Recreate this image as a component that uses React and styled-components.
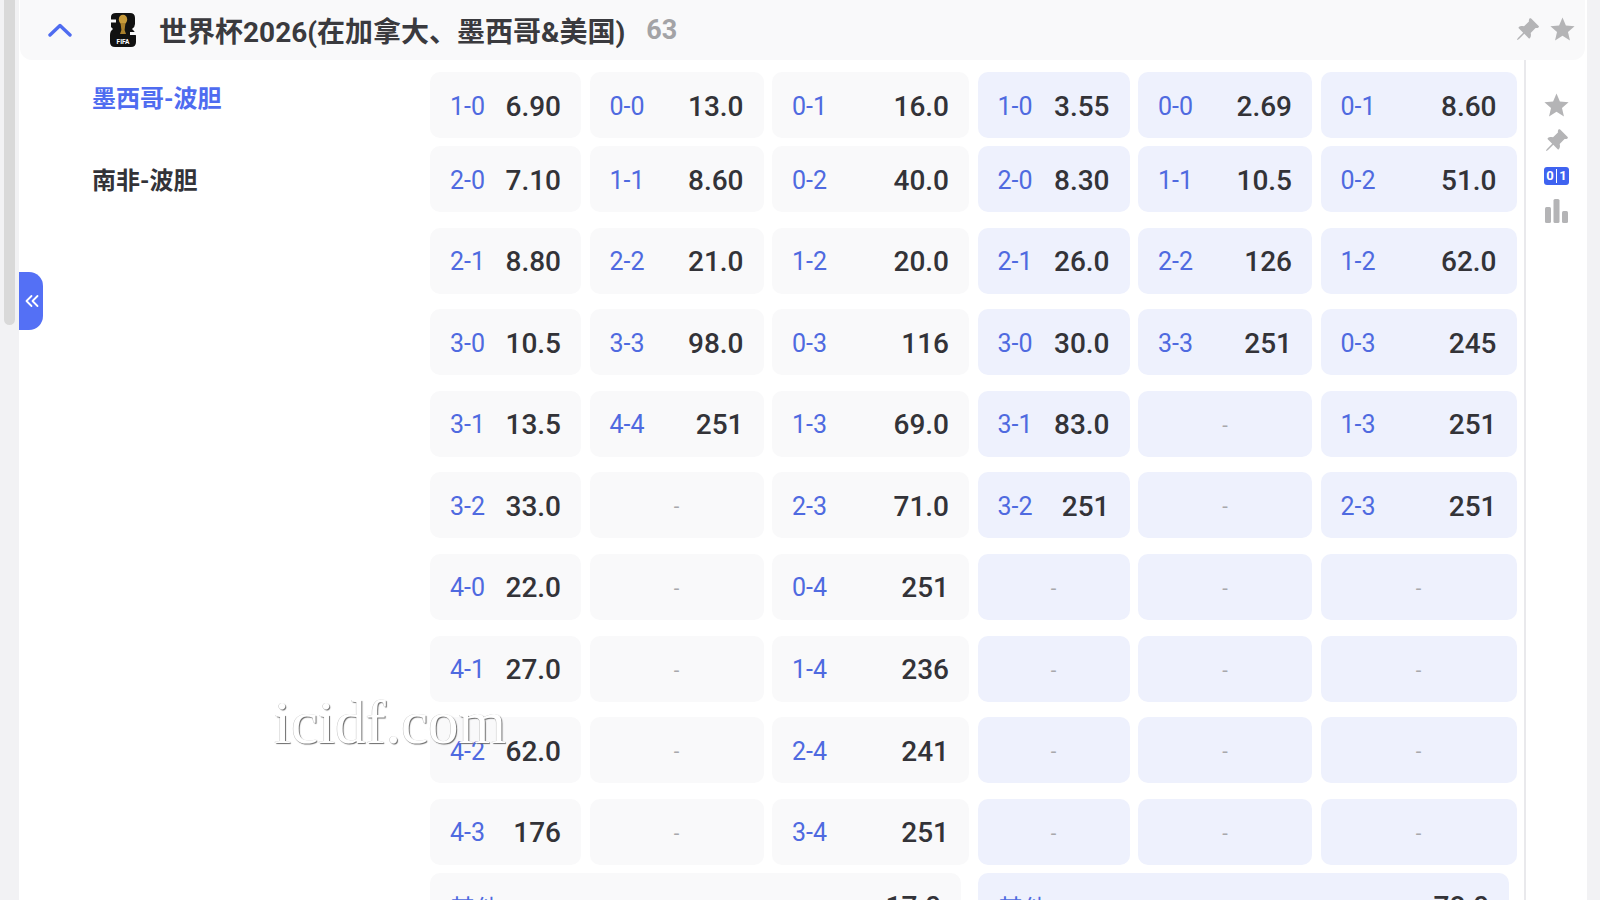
import React from "react";
import styled, { createGlobalStyle } from "styled-components";
import { BsPinAngleFill } from "react-icons/bs";
import { MdStar } from "react-icons/md";

const Global = createGlobalStyle`
  html, body { margin: 0; padding: 0; height: 900px; overflow: hidden; background: #f2f2f4; }
  * { box-sizing: border-box; }
  body { font-family: Roboto, "Noto Sans CJK SC", sans-serif; }
`;

const Page = styled.div`
  position: relative;
  display: flex;
  width: 1600px;
  height: 900px;
  overflow: hidden;
`;
const Gutter = styled.div`
  width: 19px;
  flex: none;
  padding-left: 4px;
`;
const Thumb = styled.div`
  width: 11px;
  height: 325px;
  background: #d9d9d9;
  border-radius: 0 0 6px 6px;
`;
const Main = styled.main`
  width: 1568px;
  flex: none;
  height: 900px;
  background: #fff;
`;
const Header = styled.header`
  display: flex;
  align-items: center;
  height: 60px;
  margin: 0 2px 0 1px;
  padding: 0 8px 1px 28px;
  background: #f9f9fa;
  border-radius: 0 0 12px 12px;
`;
const Chevron = styled.svg`
  width: 24px;
  height: 14px;
  flex: none;
`;
const Logo = styled.svg`
  width: 30px;
  height: 34px;
  flex: none;
  margin: 0 21px 0 36px;
`;
const Title = styled.h1`
  margin: 0;
  font-size: 28px;
  font-weight: 700;
  color: #3a3a3e;
  white-space: nowrap;
`;
const Count = styled.span`
  margin-left: 21px;
  font-size: 27px;
  font-weight: 700;
  color: #a3a3a6;
`;
const HeaderIcons = styled.div`
  margin-left: auto;
  display: flex;
  align-items: center;
  gap: 8px;
  color: #b4b4b6;
`;
const Body = styled.div`
  display: flex;
  height: 840px;
`;
const Labels = styled.div`
  width: 411px;
  flex: none;
  padding: 22px 0 0 73px;
  display: flex;
  flex-direction: column;
  gap: 48px;
`;
const TeamLabel = styled.div`
  height: 34px;
  line-height: 34px;
  font-size: 24px;
  font-weight: 700;
  color: ${(p) => (p.$active ? "#4f6cf0" : "#333338")};
`;
const Grid = styled.div`
  width: 1096px;
  flex: none;
  padding-top: 12px;
  border-right: 2px solid #e9e9ec;
`;
const Row = styled.div`
  display: grid;
  grid-template-columns: 151px 174px 197px 152px 174px 196px;
  column-gap: 8.5px;
  margin-bottom: ${(p) => p.$after}px;
`;
const Cell = styled.div`
  height: 66px;
  display: flex;
  align-items: center;
  justify-content: ${(p) => (p.$empty ? "center" : "space-between")};
  padding: 2px 20px 0;
  border-radius: 10px;
  background: ${(p) => (p.$alt ? "#eef1fd" : "#f9f9fa")};
`;
const Score = styled.span`
  font-size: 25px;
  color: #4f6ae0;
`;
const Odd = styled.span`
  font-size: 28px;
  font-weight: 500;
  color: #333338;
`;
const Dash = styled.span`
  font-size: 20px;
  color: #a8a8ac;
`;
const WideRow = styled.div`
  display: flex;
  gap: 17px;
`;
const WideCell = styled(Cell)`
  width: 531px;
`;
const Side = styled.aside`
  flex: 1;
  padding: 28px 0 0 0;
  display: flex;
  flex-direction: column;
  align-items: center;
  color: #b4b4b6;
`;
const SideSlot = styled.div`
  height: 35px;
  display: flex;
  align-items: center;
  justify-content: center;
`;
const Badge = styled.div`
  width: 25px;
  height: 18px;
  border-radius: 3px;
  background: #3f63f0;
  color: #fff;
  font-size: 13px;
  font-weight: 700;
  display: flex;
  align-items: center;
  justify-content: center;
  gap: 2px;
`;
const BadgeBar = styled.i`
  width: 1.5px;
  height: 14px;
  background: #fff;
`;
const Tab = styled.button`
  position: absolute;
  left: 19px;
  top: 272px;
  width: 24px;
  height: 58px;
  padding: 0 0 0 1px;
  border: 0;
  border-radius: 0 14px 14px 0;
  background: #5470f5;
  display: flex;
  align-items: center;
  justify-content: center;
`;
const Watermark = styled.div`
  position: absolute;
  left: 274px;
  top: 688px;
  font-family: "Liberation Serif", serif;
  font-size: 61px;
  line-height: 70px;
  color: #fff;
  text-shadow: 1px 1px 1px #6a6a6a, -0.5px 0 0.5px #c4c4c4;
`;

const rows = [
  ["1-0 6.90", "0-0 13.0", "0-1 16.0", "1-0 3.55", "0-0 2.69", "0-1 8.60", 8],
  ["2-0 7.10", "1-1 8.60", "0-2 40.0", "2-0 8.30", "1-1 10.5", "0-2 51.0", 15.6],
  ["2-1 8.80", "2-2 21.0", "1-2 20.0", "2-1 26.0", "2-2 126", "1-2 62.0", 15.6],
  ["3-0 10.5", "3-3 98.0", "0-3 116", "3-0 30.0", "3-3 251", "0-3 245", 15.6],
  ["3-1 13.5", "4-4 251", "1-3 69.0", "3-1 83.0", "", "1-3 251", 15.6],
  ["3-2 33.0", "", "2-3 71.0", "3-2 251", "", "2-3 251", 15.6],
  ["4-0 22.0", "", "0-4 251", "", "", "", 15.6],
  ["4-1 27.0", "", "1-4 236", "", "", "", 15.6],
  ["4-2 62.0", "", "2-4 241", "", "", "", 15.6],
  ["4-3 176", "", "3-4 251", "", "", "", 8],
];

function OddCell({ value, alt }) {
  if (!value) {
    return (
      <Cell $alt={alt} $empty>
        <Dash>-</Dash>
      </Cell>
    );
  }
  const [score, odd] = value.split(" ");
  return (
    <Cell $alt={alt}>
      <Score>{score}</Score>
      <Odd>{odd}</Odd>
    </Cell>
  );
}

export default function App() {
  return (
    <Page>
      <Global />
      <Gutter>
        <Thumb />
      </Gutter>
      <Main>
        <Header>
          <Chevron viewBox="0 0 24 14">
            <path d="M2 12 L12 2.5 L22 12" fill="none" stroke="#4f6cf0" strokeWidth="3.4" strokeLinecap="round" strokeLinejoin="round" />
          </Chevron>
          <Logo viewBox="0 0 30 34">
            <path d="M3 4 Q3 0 8 0 H22 Q27 0 27 5 V11 Q27 14 24 16 L26 18 Q28 20 28 23 V29 Q28 34 23 34 H7 Q2 34 2 29 V22 Q2 18 5 16 L3 14 Z" fill="#111" />
            <rect x="0" y="6.5" width="8" height="3" fill="#f9f9fa" />
            <rect x="22" y="19" width="8" height="3" fill="#f9f9fa" />
            <ellipse cx="15" cy="6.5" rx="4.2" ry="4.8" fill="#c79a3a" />
            <path d="M12.5 10 L17.5 10 L16.6 17 L18 21 L12 21 L13.4 17 Z" fill="#a97f2b" />
            <text x="15" y="31" textAnchor="middle" fontSize="6.5" fontWeight="700" fill="#fff" fontFamily="Roboto, sans-serif">FIFA</text>
          </Logo>
          <Title>世界杯2026(在加拿大、墨西哥&amp;美国)</Title>
          <Count>63</Count>
          <HeaderIcons>
            <BsPinAngleFill size={25} />
            <MdStar size={29} />
          </HeaderIcons>
        </Header>
        <Body>
          <Labels>
            <TeamLabel $active>墨西哥-波胆</TeamLabel>
            <TeamLabel>南非-波胆</TeamLabel>
          </Labels>
          <Grid>
            {rows.map((r, i) => (
              <Row key={i} $after={r[6]}>
                {r.slice(0, 6).map((v, j) => (
                  <OddCell key={j} value={v} alt={j > 2} />
                ))}
              </Row>
            ))}
            <WideRow>
              <WideCell>
                <Score>其他</Score>
                <Odd>17.0</Odd>
              </WideCell>
              <WideCell $alt>
                <Score>其他</Score>
                <Odd>78.0</Odd>
              </WideCell>
            </WideRow>
          </Grid>
          <Side>
            <SideSlot>
              <MdStar size={29} />
            </SideSlot>
            <SideSlot>
              <BsPinAngleFill size={25} />
            </SideSlot>
            <SideSlot>
              <Badge>
                <span>0</span>
                <BadgeBar />
                <span>1</span>
              </Badge>
            </SideSlot>
            <SideSlot>
              <svg width="23" height="24" viewBox="0 0 23 24" fill="currentColor">
                <rect x="0" y="8" width="6" height="16" rx="1.5" />
                <rect x="8.5" y="0" width="6" height="24" rx="1.5" />
                <rect x="17" y="12" width="6" height="12" rx="1.5" />
              </svg>
            </SideSlot>
          </Side>
        </Body>
      </Main>
      <Tab aria-label="collapse">
        <svg width="14" height="14" viewBox="0 0 14 14" fill="none" stroke="#fff" strokeWidth="1.8" strokeLinecap="round" strokeLinejoin="round">
          <path d="M6.5 2 L1.5 7 L6.5 12" />
          <path d="M12.5 2 L7.5 7 L12.5 12" />
        </svg>
      </Tab>
      <Watermark>icidf.com</Watermark>
    </Page>
  );
}
